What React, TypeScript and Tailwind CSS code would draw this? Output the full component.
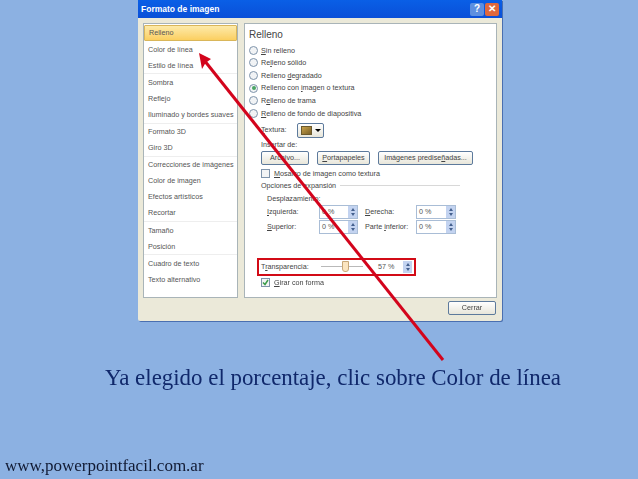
const ui = { fontFamily: '"Liberation Sans", sans-serif' }

const groups = [
  ['Relleno', 'Color de línea', 'Estilo de línea'],
  ['Sombra', 'Reflejo', 'Iluminado y bordes suaves'],
  ['Formato 3D', 'Giro 3D'],
  ['Correcciones de imágenes', 'Color de imagen', 'Efectos artísticos', 'Recortar'],
  ['Tamaño', 'Posición'],
  ['Cuadro de texto', 'Texto alternativo'],
]

function Radio({ label, checked }: { label: React.ReactNode; checked?: boolean }) {
  return (
    <div className="flex h-[12.6px] items-center">
      <span className="flex h-[9px] w-[9px] items-center justify-center rounded-full border border-[#7f94ab] bg-[#f1f3f5]">
        {checked && <span className="h-[4px] w-[4px] rounded-full bg-[#4aa564]" />}
      </span>
      <span className="ml-[3px] text-[#444]">{label}</span>
    </div>
  )
}

function Btn({ className, children }: { className: string; children: React.ReactNode }) {
  return (
    <div className={`flex items-center justify-center rounded-[2px] border border-[#5d7a9c] bg-gradient-to-b from-white to-[#e8e6da] text-[#444] ${className}`}>
      {children}
    </div>
  )
}

function Check({ checked }: { checked?: boolean }) {
  return (
    <span className="flex h-[9px] w-[9px] items-center justify-center border border-[#7f94ab] bg-[#f3f4f5]">
      {checked && (
        <svg width="7" height="7" viewBox="0 0 7 7">
          <path d="M1 3.5 L3 5.5 L6 1" fill="none" stroke="#3a9c4a" strokeWidth="1.5" />
        </svg>
      )}
    </span>
  )
}

function Spin({ value, className }: { value: string; className: string }) {
  return (
    <div className={`flex h-[14px] items-center justify-between border border-[#a9bdd6] bg-white pl-[2px] text-[#555] ${className}`}>
      <span>{value}</span>
      <span className="flex h-full w-[9px] flex-col items-center justify-center gap-[2px] bg-[#c3d3f0]">
        <span className="h-0 w-0 border-x-[2.5px] border-b-[3px] border-x-transparent border-b-[#44608f]" />
        <span className="h-0 w-0 border-x-[2.5px] border-t-[3px] border-x-transparent border-t-[#44608f]" />
      </span>
    </div>
  )
}

export default function App() {
  return (
    <div className="relative h-[479px] w-[638px] overflow-hidden bg-[#8cb1e2]">
      <div className="ml-[138px] flex h-[321px] w-[364px] flex-col rounded-b-[2px] bg-[#ebe9d9] text-[7.2px] leading-none shadow-[1px_1px_0_#4a6fb0] blur-[0.35px]" style={ui}>
        <div className="flex h-[18px] items-center justify-between bg-gradient-to-b from-[#0a5fe6] to-[#0a4fd8] pl-[3px] pr-[3px]">
          <span className="text-[8.5px] font-bold text-white">Formato de imagen</span>
          <div className="flex gap-[1px]">
            <span className="flex h-[13px] w-[14px] items-center justify-center rounded-[2px] bg-[#5d8fe0] text-[10px] font-bold text-white">?</span>
            <span className="flex h-[13px] w-[14px] items-center justify-center rounded-[2px] bg-[#e0683c] text-[10px] font-bold text-white">✕</span>
          </div>
        </div>

        <div className="mt-[5px] flex h-[275px] pl-[5px]">
          <div className="h-full w-[95px] border border-[#a9b4b8] bg-white py-px text-[#555]">
            {groups.map((group, i) => (
              <div key={i} className={i > 0 ? 'border-t border-[#eeeeee]' : ''}>
                {group.map(item => (
                  <div
                    key={item}
                    className={`flex h-[16.1px] items-center whitespace-nowrap pl-[4px] ${item === 'Relleno' ? 'rounded-[1px] border border-[#d9b65a] bg-gradient-to-b from-[#fdeaa8] to-[#fbcf5f]' : ''}`}
                  >
                    {item}
                  </div>
                ))}
              </div>
            ))}
          </div>

          <div className="ml-[6px] h-full w-[253px] border border-[#a9b4b8] bg-white pl-[4px] pt-[5px]">
            <div className="text-[10px] leading-[12px] text-[#444]">Relleno</div>
            <div className="mt-[3px]">
              <Radio label={<><u>S</u>in relleno</>} />
              <Radio label={<>Re<u>l</u>leno sólido</>} />
              <Radio label={<>Relleno <u>d</u>egradado</>} />
              <Radio checked label={<>Relleno con <u>i</u>magen o textura</>} />
              <Radio label={<>R<u>e</u>lleno de trama</>} />
              <Radio label={<><u>R</u>elleno de fondo de diapositiva</>} />
            </div>

            <div className="ml-[12px] text-[#444]">
              <div className="mt-[3px] flex h-[15px] items-center">
                <span className="w-[36px]"><u>T</u>extura:</span>
                <Btn className="h-[15px] w-[27px] gap-[3px]">
                  <span className="h-[9px] w-[11px] border border-[#6b5a2e] bg-gradient-to-br from-[#c9a24a] to-[#7a6128]" />
                  <span className="h-0 w-0 border-x-[3px] border-t-[3px] border-x-transparent border-t-black" />
                </Btn>
              </div>
              <div className="mt-[2px] leading-[10px]">Insertar de:</div>
              <div className="mt-[1px] flex gap-[8px]">
                <Btn className="h-[14px] w-[48px]">Archivo...</Btn>
                <Btn className="h-[14px] w-[53px]"><span><u>P</u>ortapapeles</span></Btn>
                <Btn className="h-[14px] w-[95px]"><span>Imágenes predise<u>ñ</u>adas...</span></Btn>
              </div>
              <div className="mt-[4px] flex h-[10px] items-center gap-[4px]">
                <Check />
                <span><u>M</u>osaico de imagen como textura</span>
              </div>
              <div className="mt-[2px] flex h-[10px] w-[199px] items-center gap-[4px]">
                <span>Opciones de expansión</span>
                <span className="h-px flex-1 bg-[#d8d8d8]" />
              </div>
              <div className="ml-[6px]">
                <div className="mt-[3px] h-[10px] leading-[10px]">Desplazamiento:</div>
                <div className="mt-[1px] flex items-center">
                  <span className="w-[52px]"><u>I</u>zquierda:</span>
                  <Spin value="0 %" className="w-[39px]" />
                  <span className="ml-[7px] w-[51px]"><u>D</u>erecha:</span>
                  <Spin value="0 %" className="w-[40px]" />
                </div>
                <div className="mt-[1px] flex items-center">
                  <span className="w-[52px]"><u>S</u>uperior:</span>
                  <Spin value="0 %" className="w-[39px]" />
                  <span className="ml-[7px] w-[51px]">Parte <u>i</u>nferior:</span>
                  <Spin value="0 %" className="w-[40px]" />
                </div>
              </div>
            </div>

            <div className="ml-[8px] mt-[24px] flex h-[18px] w-[159px] items-center border-[2px] border-[#d20b16] pl-[2px] text-[#444]">
              <span className="w-[60px]">T<u>r</u>ansparencia:</span>
              <span className="relative h-px w-[42px] bg-[#b9b9b9]">
                <span className="absolute left-[21px] top-[-5px] h-[11px] w-[7px] rounded-b-[3px] border border-[#c8a878] bg-[#fbe5c0]" />
              </span>
              <Spin value="57 %" className="ml-[12px] h-[13px] w-[38px] border-transparent" />
            </div>
            <div className="ml-[12px] mt-[2px] flex h-[10px] items-center gap-[4px] text-[#444]">
              <Check checked />
              <span><u>G</u>irar con forma</span>
            </div>
          </div>
        </div>

        <div className="flex justify-end pr-[6px] pt-[3px]">
          <Btn className="h-[14px] w-[48px] border-[#4a6d96]">Cerrar</Btn>
        </div>
      </div>

      <svg className="absolute left-0 top-0" width="638" height="479" viewBox="0 0 638 479">
        <path d="M443 360 L204 60" stroke="#d3041c" strokeWidth="3" fill="none" />
        <polygon points="199,53 211,59 205.5,63 202,69" fill="#d3041c" />
      </svg>

      <div className="absolute left-[105px] top-[363px] whitespace-nowrap font-['Liberation_Serif',serif] text-[22.9px] leading-[30px] text-[#10286b]">
        Ya elegido el porcentaje, clic sobre Color de línea
      </div>
      <div className="absolute left-[5px] top-[455px] whitespace-nowrap font-['Liberation_Serif',serif] text-[17px] leading-[22px] text-[#111a33]">
        www,powerpointfacil.com.ar
      </div>
    </div>
  )
}
